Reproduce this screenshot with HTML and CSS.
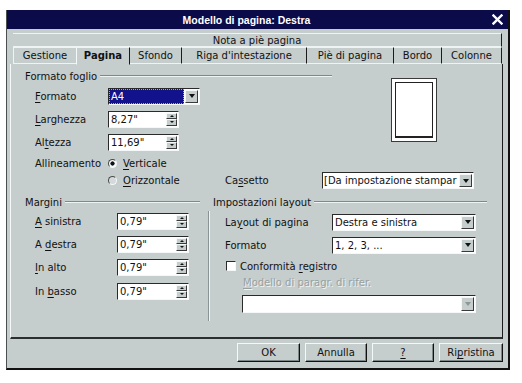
FILE: index.html
```html
<html>
<head>
    <meta charset="UTF-8">
    <title>Modello di pagina: Destra</title>
    <link rel="stylesheet" href="styles.css">
</head>
<body>

<div class="window">
    <div class="titlebar">
        <div class="title">Modello di pagina: Destra</div>
        <div class="close">
            <svg width="11" height="11" viewBox="0 0 11 11"><path d="M1.5 1.5 L9.5 9.5 M9.5 1.5 L1.5 9.5" stroke="#fff" stroke-width="2.4" stroke-linecap="square"/></svg>
        </div>
    </div>

    <div class="body">
        <div class="tabs">
            <div class="tab-row row-back">
                <div class="tab">Nota a piè pagina</div>
            </div>
            <div class="tab-row">
                <div class="tab t-gestione">Gestione</div>
                <div class="tab t-pagina active">Pagina</div>
                <div class="tab t-sfondo">Sfondo</div>
                <div class="tab t-riga">Riga d'intestazione</div>
                <div class="tab t-pie">Piè di pagina</div>
                <div class="tab t-bordo">Bordo</div>
                <div class="tab t-colonne">Colonne</div>
            </div>
        </div>

        <div class="panel">
            <!-- Formato foglio -->
            <div class="sheet">
                <div class="sheet-main">
                    <div class="group-head"><span>Formato foglio</span></div>
                    <div class="row r-format">
                        <span class="label"><u>F</u>ormato</span>
                        <div class="combo c-format selected"><span class="val">A4</span><span class="drop"></span></div>
                    </div>
                    <div class="row r-spin">
                        <span class="label"><u>L</u>arghezza</span>
                        <div class="spin s-size"><span class="val">8,27"</span><span class="arrows"><i class="up"></i><i class="down"></i></span></div>
                    </div>
                    <div class="row r-spin">
                        <span class="label">Al<u>t</u>ezza</span>
                        <div class="spin s-size"><span class="val">11,69"</span><span class="arrows"><i class="up"></i><i class="down"></i></span></div>
                    </div>
                    <div class="row r-radio">
                        <span class="label">Allineamento</span>
                        <span class="radio checked"></span><span><u>V</u>erticale</span>
                    </div>
                </div>
                <div class="preview"><div class="page"></div></div>
            </div>
            <div class="row r-orient">
                <span class="label"></span>
                <span class="radio"></span><span class="orient-text"><u>O</u>rizzontale</span>
                <span class="tray-label">Ca<u>s</u>setto</span>
                <div class="combo c-tray"><span class="val">[Da impostazione stampar</span><span class="drop"></span></div>
            </div>

            <!-- Margini / Impostazioni layout -->
            <div class="lower">
                <div class="margins">
                    <div class="group-head"><span>Margini</span></div>
                    <div class="row r-margin">
                        <span class="label m-label"><u>A</u> sinistra</span>
                        <div class="spin s-margin"><span class="val">0,79"</span><span class="arrows"><i class="up"></i><i class="down"></i></span></div>
                    </div>
                    <div class="row r-margin">
                        <span class="label m-label">A <u>d</u>estra</span>
                        <div class="spin s-margin"><span class="val">0,79"</span><span class="arrows"><i class="up"></i><i class="down"></i></span></div>
                    </div>
                    <div class="row r-margin">
                        <span class="label m-label"><u>I</u>n alto</span>
                        <div class="spin s-margin"><span class="val">0,79"</span><span class="arrows"><i class="up"></i><i class="down"></i></span></div>
                    </div>
                    <div class="row r-margin last">
                        <span class="label m-label">In <u>b</u>asso</span>
                        <div class="spin s-margin"><span class="val">0,79"</span><span class="arrows"><i class="up"></i><i class="down"></i></span></div>
                    </div>
                </div>
                <div class="vsep"></div>
                <div class="layout">
                    <div class="group-head"><span>Impostazioni layout</span></div>
                    <div class="row r-layout">
                        <span class="label l-label">La<u>y</u>out di pagina</span>
                        <div class="combo c-layout"><span class="val">Destra e sinistra</span><span class="drop"></span></div>
                    </div>
                    <div class="row r-layout">
                        <span class="label l-label">Formato</span>
                        <div class="combo c-layout"><span class="val">1, 2, 3, ...</span><span class="drop"></span></div>
                    </div>
                    <div class="row r-check">
                        <span class="checkbox"></span><span>Conformità <u>r</u>egistro</span>
                    </div>
                    <div class="disabled-label"><u>M</u>odello di paragr. di rifer.</div>
                    <div class="combo c-ref disabled"><span class="val"></span><span class="drop"></span></div>
                </div>
            </div>
        </div>

        <div class="buttons">
            <button class="b-ok">OK</button>
            <button class="b-cancel">Annulla</button>
            <button class="b-help"><u>?</u></button>
            <button class="b-reset">Ri<u>p</u>ristina</button>
        </div>
    </div>
</div>

</body>
</html>
```

FILE: styles.css
```css
body { margin: 0; background: #fff; font-family: "DejaVu Sans", sans-serif; font-size: 10px; color: #111; }
u { text-underline-offset: 2px; }

.window { margin: 10px 0 0 6px; width: 504px; height: 360px; box-sizing: border-box; background: #c5cdcd; border-left: 1px solid #4a5050; border-right: 2px solid #111; border-bottom: 2px solid #111; display: flex; flex-direction: column; }

.titlebar { height: 19px; flex: none; display: flex; align-items: center; background: #0b0b4a; color: #fff; }
.title { flex: 1; text-align: center; font-family: "Liberation Sans", sans-serif; font-weight: bold; font-size: 10.5px; }
.close { width: 22px; display: flex; justify-content: center; align-items: center; }

.body { padding: 4px 5px 0 3px; display: flex; flex-direction: column; }

/* Tabs */
.tabs { margin: 0 1px 0 3px; }
.tab-row { display: flex; }
.row-back { height: 14px; }
.row-back .tab { flex: 1; line-height: 13px; }
.tab-row + .tab-row { height: 17px; }
.tab { box-sizing: border-box; text-align: center; line-height: 16px; border-top: 1px solid #eef3f3; border-right: 1px solid #1c1c1c; border-bottom: 1px solid #eef3f3; white-space: nowrap; }
.tab.active { font-weight: bold; border-left: 1px solid #f4f8f8; border-bottom-color: #c5cdcd; margin-bottom: -1px; position: relative; z-index: 1; }
.t-gestione { width: 63px; border-right: none; border-left: 1px solid #eef3f3; }
.t-pagina { width: 54px; }
.t-sfondo { width: 52px; }
.t-riga { width: 125px; }
.t-pie { width: 87px; }
.t-bordo { width: 48px; }
.t-colonne { width: 60px; }

/* Panel */
.panel { width: 493px; height: 275px; box-sizing: border-box; border-left: 1px solid #f4f8f8; border-right: 1px solid #1c1c1c; border-bottom: 2px solid #2a2e2e; padding: 5px 0 0 14px; }

.group-head { display: flex; align-items: center; height: 14px; }
.group-head span { padding-right: 3px; }
.group-head::after { content: ""; flex: 1; border-top: 1px solid #7f8989; border-bottom: 1px solid #eef3f3; }

.row { display: flex; align-items: center; padding-left: 10px; }
.label { width: 73px; flex: none; white-space: nowrap; }

.sheet { display: flex; }
.sheet-main { width: 307px; }
.r-format { height: 18px; margin-top: 4px; }
.r-spin { height: 18px; margin-top: 5px; }
.r-radio { height: 17px; margin-top: 4px; }
.r-orient { height: 17px; }
.orient-text { width: 102px; }
.tray-label { width: 97px; }

.preview { width: 46px; height: 64px; box-sizing: border-box; margin: 9px 0 0 59px; padding: 3px; background: #fff; border: 1px solid #3a3a3a; }
.page { height: 100%; box-sizing: border-box; border: 1px solid #222; border-bottom-width: 2px; }

/* Controls */
.combo, .spin { display: flex; box-sizing: border-box; background: #fff; border: 1px solid; border-color: #2a2a2a #f4f8f8 #f4f8f8 #2a2a2a; }
.combo { height: 17px; }
.spin { height: 17px; }
.val { flex: 1; padding-left: 2px; line-height: 15px; white-space: nowrap; overflow: hidden; }
.drop { width: 13px; flex: none; margin: 1px; box-sizing: border-box; background: #c5cdcd; border: 1px solid; border-color: #f4f8f8 #3a3a3a #3a3a3a #f4f8f8; display: flex; align-items: center; justify-content: center; }
.drop::after { content: ""; border-left: 3.5px solid transparent; border-right: 3.5px solid transparent; border-top: 4px solid #111; }

.selected .val { background: #12128c; color: #fff; outline: 1px dotted #9aa0ff; outline-offset: -1px; }
.c-format { width: 92px; }
.c-tray { width: 152px; }
.c-tray .val { padding-left: 1px; }
.c-layout { width: 144px; }
.c-ref { width: 234px; height: 18px; margin: 4px 0 0 29px; }
.disabled .drop::after { border-top-color: #8e9696; }

.arrows { width: 11px; flex: none; margin: 1px; display: flex; flex-direction: column; }
.arrows i { flex: 1; box-sizing: border-box; background: #c5cdcd; border: 1px solid; border-color: #f4f8f8 #3a3a3a #3a3a3a #f4f8f8; display: flex; align-items: center; justify-content: center; }
.arrows .up::after { content: ""; border-left: 2px solid transparent; border-right: 2px solid transparent; border-bottom: 2px solid #111; }
.arrows .down::after { content: ""; border-left: 2px solid transparent; border-right: 2px solid transparent; border-top: 2px solid #111; }
.s-size { width: 71px; }
.s-margin { width: 72px; }

.radio { width: 9px; height: 9px; flex: none; box-sizing: border-box; border-radius: 50%; border: 1px solid; border-color: #4a4a4a #f4f8f8 #f4f8f8 #4a4a4a; margin-right: 6px; background: #d4dada; }
.radio.checked { background: radial-gradient(circle, #111 0 1.8px, #f4f8f8 2.4px); }

.checkbox { width: 10px; height: 10px; flex: none; box-sizing: border-box; background: #fff; border: 1px solid; border-color: #2a2a2a #f4f8f8 #f4f8f8 #2a2a2a; margin-right: 4px; }

/* Lower part */
.lower { display: flex; margin-top: 6px; }
.margins { width: 175px; }
.m-label { width: 82px; }
.r-margin { height: 18px; margin-top: 5px; }
.margins .group-head + .r-margin { margin-top: 3px; }
.r-margin.last { margin-top: 6px; }
.vsep { width: 0; margin: 16px 0 -8px 8px; border-left: 1px solid #8a9494; border-right: 1px solid #eef3f3; }
.layout { width: 274px; margin-left: 3px; }
.l-label { width: 107px; }
.r-layout { height: 18px; margin-top: 5px; padding-left: 12px; }
.layout .group-head + .r-layout { margin-top: 4px; }
.r-check { height: 18px; margin-top: 3px; padding-left: 13px; }
.disabled-label { height: 16px; line-height: 16px; padding-left: 30px; color: #98a1a1; text-shadow: 1px 1px 0 #eef3f3; }

/* Buttons */
.buttons { display: flex; justify-content: flex-end; gap: 5px; margin-top: 4px; }
button { height: 19px; padding: 0; font-family: "DejaVu Sans", sans-serif; font-size: 10px; color: #111; background: #c5cdcd; border: 1px solid; border-color: #f4f8f8 #111 #111 #f4f8f8; box-shadow: inset -1px -1px 0 #7d8787; }
.b-ok { width: 63px; }
.b-cancel { width: 62px; }
.b-help { width: 62px; }
.b-reset { width: 64px; }
```
